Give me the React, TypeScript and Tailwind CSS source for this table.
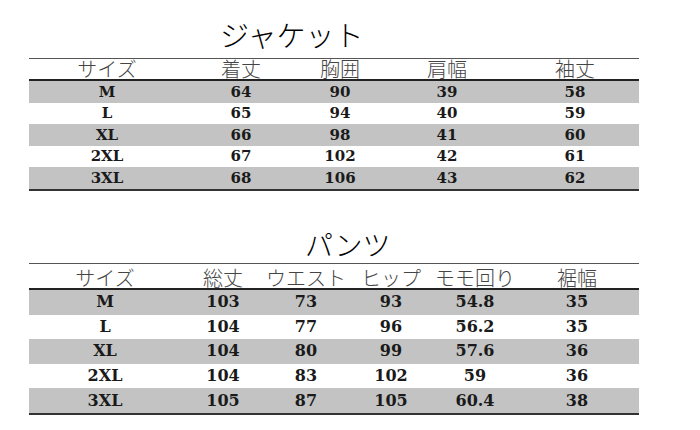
const jacketCols = ["w-[156px]", "w-[112px]", "w-[86px]", "w-[128px]", "w-[128px]"];
const pantsCols = ["w-[152px]", "w-[84px]", "w-[82px]", "w-[88px]", "w-[80px]", "w-[124px]"];

const jacket = {
  head: ["サイズ", "着丈", "胸囲", "肩幅", "袖丈"],
  rows: [
    ["M", "64", "90", "39", "58"],
    ["L", "65", "94", "40", "59"],
    ["XL", "66", "98", "41", "60"],
    ["2XL", "67", "102", "42", "61"],
    ["3XL", "68", "106", "43", "62"],
  ],
};

const pants = {
  head: ["サイズ", "総丈", "ウエスト", "ヒップ", "モモ回り", "裾幅"],
  rows: [
    ["M", "103", "73", "93", "54.8", "35"],
    ["L", "104", "77", "96", "56.2", "35"],
    ["XL", "104", "80", "99", "57.6", "36"],
    ["2XL", "104", "83", "102", "59", "36"],
    ["3XL", "105", "87", "105", "60.4", "38"],
  ],
};

const jp = { fontFamily: '"Noto Sans CJK JP", "Noto Sans", sans-serif' };
const num = { fontFamily: '"DejaVu Serif", "Liberation Serif", serif' };

function SizeTable({
  data,
  cols,
  headH,
  rowH,
  numSize,
}: {
  data: { head: string[]; rows: string[][] };
  cols: string[];
  headH: string;
  rowH: string;
  numSize: string;
}) {
  return (
    <div className="w-[610px] border-t border-[#555] border-b-2 border-b-[#333]">
      <div className={`flex ${headH} items-end border-b-2 border-[#222]`} style={jp}>
        {data.head.map((h, i) => (
          <div
            key={i}
            className={`${cols[i]} shrink-0 text-center text-[20px] leading-[20px] font-light text-[#444] whitespace-nowrap`}
          >
            {h}
          </div>
        ))}
      </div>
      {data.rows.map((r, ri) => (
        <div
          key={ri}
          className={`flex ${rowH} items-center ${ri % 2 === 0 ? "bg-[#c3c3c3]" : "bg-white"}`}
          style={num}
        >
          {r.map((c, ci) => (
            <div
              key={ci}
              className={`${cols[ci]} shrink-0 text-center font-bold text-[#1a1a1a] ${numSize}`}
            >
              {c}
            </div>
          ))}
        </div>
      ))}
    </div>
  );
}

export default function App() {
  return (
    <div className="w-[700px] h-[430px] bg-white overflow-hidden pl-[29px]">
      <div className="h-[58px] pt-[19px] pl-[191px]">
        <div className="text-[29px] leading-[30px] font-light text-black" style={jp}>
          ジャケット
        </div>
      </div>
      <SizeTable
        data={jacket}
        cols={jacketCols}
        headH="h-[22px]"
        rowH="h-[21.6px]"
        numSize="text-[15px]"
      />
      <div className="h-[72px] pt-[38px] pl-[276px]">
        <div className="text-[28px] leading-[30px] font-light text-black" style={jp}>
          パンツ
        </div>
      </div>
      <SizeTable
        data={pants}
        cols={pantsCols}
        headH="h-[26px]"
        rowH="h-[24.6px]"
        numSize="text-[16px]"
      />
    </div>
  );
}
